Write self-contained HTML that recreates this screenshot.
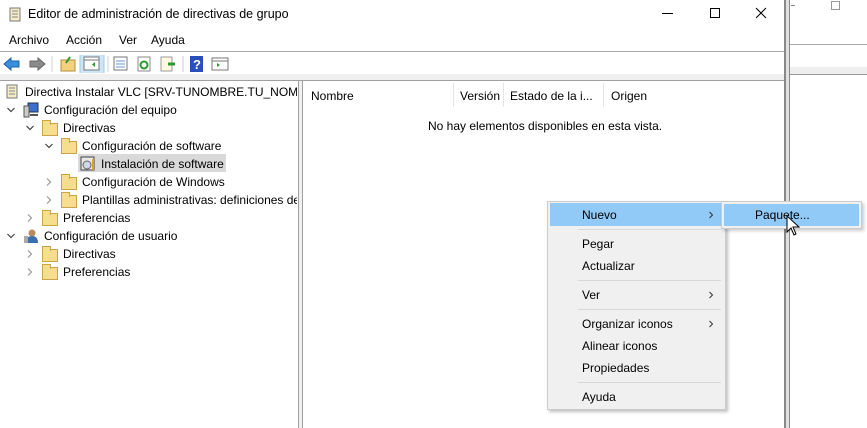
<!DOCTYPE html>
<html><head><meta charset="utf-8"><style>
*{margin:0;padding:0;box-sizing:border-box}
body{width:867px;height:428px;overflow:hidden;background:#fff;font-family:"Liberation Sans",sans-serif;font-size:12px;color:#000;position:relative}
.a{position:absolute}
.t{white-space:nowrap;font-size:12px}
.fold{position:absolute;width:16px;height:13px;background:#f7dd8e;border:1px solid #c9a44a}
.fold:before{content:"";position:absolute;left:-1px;top:-4px;width:7px;height:4px;background:#f7dd8e;border:1px solid #c9a44a;border-bottom:none}
.dn,.rt{position:absolute;width:10px;height:10px}
.mi{position:absolute;left:582px;font-size:12px}
.sep{position:absolute;left:578px;width:143px;height:1px;background:#d8d8d8}
.ar{position:absolute;width:8px;height:8px}
</style></head><body>
<svg width="0" height="0" style="position:absolute"><defs>
<symbol id="d" viewBox="0 0 10 10"><path d="M1.5 3l3.5 3.5L8.5 3" fill="none" stroke="#444" stroke-width="1.2"/></symbol>
<symbol id="r" viewBox="0 0 10 10"><path d="M3 1.5l3.5 3.5L3 8.5" fill="none" stroke="#999" stroke-width="1.2"/></symbol>
<symbol id="m" viewBox="0 0 8 8"><path d="M2.5 1l3 3-3 3" fill="none" stroke="#333" stroke-width="1"/></symbol>
</defs></svg>
<!-- right background window -->
<div class="a" style="left:784px;top:0;width:2px;height:428px;background:#888"></div>
<div class="a" style="left:786px;top:0;width:3px;height:428px;background:#e0e0e0"></div>
<div class="a" style="left:789px;top:0;width:1px;height:428px;background:#888"></div>
<div class="a" style="left:790px;top:44px;width:77px;height:1px;background:#aaa"></div>
<div class="a" style="left:790px;top:67px;width:77px;height:7px;background:#eee"></div>
<div class="a" style="left:790px;top:74px;width:77px;height:1px;background:#999"></div>
<div class="a" style="left:831px;top:1px;width:9px;height:9px;border:1px solid #999"></div>
<div class="a" style="left:791px;top:5px;width:4px;height:1px;background:#888"></div>

<!-- title -->
<svg class="a" style="left:7px;top:6px" width="16" height="18"><path d="M3 2h10v13H3z" fill="#f5ecc8" stroke="#777"/><path d="M5 5h6M5 8h6M5 11h6" stroke="#888"/></svg>
<div class="a t" style="left:28px;top:7px;font-size:12.5px">Editor de administración de directivas de grupo</div>
<div class="a" style="left:662px;top:13px;width:11px;height:1px;background:#000"></div>
<div class="a" style="left:710px;top:8px;width:10px;height:10px;border:1px solid #000"></div>
<svg class="a" style="left:755px;top:7px" width="12" height="12"><path d="M1 1L11 11M11 1L1 11" stroke="#000"/></svg>
<!-- menu -->
<div class="a t" style="left:9px;top:33px">Archivo</div>
<div class="a t" style="left:66px;top:33px">Acción</div>
<div class="a t" style="left:119px;top:33px">Ver</div>
<div class="a t" style="left:151px;top:33px">Ayuda</div>
<div class="a" style="left:0;top:51px;width:784px;height:1px;background:#aaa"></div>
<!-- toolbar -->
<svg class="a" style="left:3px;top:55px" width="240" height="18">
<path d="M1 9l7-6v3h8v6H8v3z" fill="#3a8ee0" stroke="#1d5fa8"/>
<path d="M42 9l-7-6v3h-8v6h8v3z" fill="#8a8a8a" stroke="#666"/>
<path d="M49 1v16" stroke="#ccc"/>
<rect x="58" y="5" width="14" height="11" fill="#f3d17e" stroke="#b48e3a"/><path d="M63 8l4-6" stroke="#2a9a2a" stroke-width="2"/>
<rect x="77" y="-2" width="24" height="22" fill="#cde6f7" stroke="#99cbed"/>
<rect x="81" y="2" width="15" height="13" fill="#fff" stroke="#777"/><path d="M81 5h15" stroke="#777"/><path d="M92 7l-3 2.5 3 2.5z" fill="#2a9a2a"/>
<path d="M105 1v16" stroke="#ccc"/>
<rect x="111" y="2" width="13" height="13" fill="#fff" stroke="#777"/><path d="M113 6h9M113 9h9M113 12h9" stroke="#6a9ad0"/>
<rect x="135" y="2" width="12" height="14" fill="#fff" stroke="#888"/><circle cx="141" cy="10" r="3.5" fill="none" stroke="#2a9a2a" stroke-width="2"/>
<rect x="158" y="2" width="11" height="14" fill="#fff8e0" stroke="#999"/><path d="M165 9h7" stroke="#2a9a2a" stroke-width="3"/>
<path d="M180 1v16" stroke="#ccc"/>
<rect x="187" y="1" width="13" height="16" fill="#2b4fb8"/><text x="190" y="14" fill="#fff" font-size="13" font-family="Liberation Sans" font-weight="bold">?</text>
<rect x="209" y="3" width="16" height="12" fill="#fff" stroke="#777"/><path d="M209 6h16" stroke="#777"/><path d="M214 8l3 2-3 2z" fill="#2a9a2a"/>
</svg>
<div class="a" style="left:0;top:74px;width:784px;height:6px;background:#f0f0f0"></div>
<div class="a" style="left:0;top:80px;width:784px;height:1px;background:#a0a0a0"></div>
<!-- splitter -->
<div class="a" style="left:298px;top:81px;width:1px;height:347px;background:#a0a0a0"></div>
<div class="a" style="left:299px;top:81px;width:3px;height:347px;background:#f0f0f0"></div>
<div class="a" style="left:302px;top:81px;width:1px;height:347px;background:#a0a0a0"></div>

<!-- tree -->
<svg class="a" style="left:4px;top:84px" width="16" height="16"><path d="M3 1h10v13H3z" fill="#f5ecc8" stroke="#777"/><path d="M5 4h6M5 7h6M5 10h6" stroke="#888"/></svg>
<div class="a t" style="left:25px;top:85px;width:272px;overflow:hidden">Directiva Instalar VLC [SRV-TUNOMBRE.TU_NOMBR</div>
<svg class="dn" style="left:6px;top:105px"><use href="#d"/></svg>
<svg class="a" style="left:23px;top:102px" width="16" height="16"><rect x="5" y="1" width="10" height="9" fill="#3a6fd0" stroke="#234"/><rect x="1" y="4" width="5" height="11" fill="#ccc" stroke="#555"/><path d="M7 13h8" stroke="#555" stroke-width="2"/></svg>
<div class="a t" style="left:44px;top:103px">Configuración del equipo</div>
<svg class="dn" style="left:25px;top:123px"><use href="#d"/></svg>
<div class="fold" style="left:42px;top:123px"></div>
<div class="a t" style="left:63px;top:121px">Directivas</div>
<svg class="dn" style="left:44px;top:141px"><use href="#d"/></svg>
<div class="fold" style="left:61px;top:141px"></div>
<div class="a t" style="left:82px;top:139px">Configuración de software</div>
<div class="a" style="left:78px;top:154px;width:148px;height:18px;background:#d9d9d9"></div>
<svg class="a" style="left:80px;top:156px" width="16" height="15"><rect x="1" y="1" width="13" height="13" fill="#e8e8e8" stroke="#444"/><circle cx="7" cy="9" r="4" fill="#cfd8e0" stroke="#666"/><path d="M13 3v11" stroke="#e0a020" stroke-width="2"/></svg>
<div class="a t" style="left:101px;top:157px">Instalación de software</div>
<svg class="rt" style="left:44px;top:177px"><use href="#r"/></svg>
<div class="fold" style="left:61px;top:177px"></div>
<div class="a t" style="left:82px;top:175px">Configuración de Windows</div>
<svg class="rt" style="left:44px;top:195px"><use href="#r"/></svg>
<div class="fold" style="left:61px;top:195px"></div>
<div class="a t" style="left:82px;top:193px;width:215px;overflow:hidden">Plantillas administrativas: definiciones de</div>
<svg class="rt" style="left:25px;top:213px"><use href="#r"/></svg>
<div class="fold" style="left:42px;top:213px"></div>
<div class="a t" style="left:63px;top:211px">Preferencias</div>
<svg class="dn" style="left:6px;top:231px"><use href="#d"/></svg>
<svg class="a" style="left:23px;top:228px" width="16" height="16"><circle cx="9" cy="5" r="3.5" fill="#b88a60"/><path d="M3 15q0-7 6-7t6 7z" fill="#3a6fb0"/><rect x="1" y="8" width="4" height="7" fill="#aaa"/></svg>
<div class="a t" style="left:44px;top:229px">Configuración de usuario</div>
<svg class="rt" style="left:25px;top:249px"><use href="#r"/></svg>
<div class="fold" style="left:42px;top:249px"></div>
<div class="a t" style="left:63px;top:247px">Directivas</div>
<svg class="rt" style="left:25px;top:267px"><use href="#r"/></svg>
<div class="fold" style="left:42px;top:267px"></div>
<div class="a t" style="left:63px;top:265px">Preferencias</div>

<!-- list header -->
<div class="a t" style="left:311px;top:89px">Nombre</div>
<div class="a" style="left:453px;top:83px;width:1px;height:24px;background:#e5e5e5"></div>
<div class="a t" style="left:460px;top:89px">Versión</div>
<div class="a" style="left:503px;top:83px;width:1px;height:24px;background:#e5e5e5"></div>
<div class="a t" style="left:510px;top:89px">Estado de la i...</div>
<div class="a" style="left:603px;top:83px;width:1px;height:24px;background:#e5e5e5"></div>
<div class="a t" style="left:611px;top:89px">Origen</div>
<div class="a t" style="left:428px;top:119px">No hay elementos disponibles en esta vista.</div>

<!-- context menu -->
<div class="a" style="left:547px;top:201px;width:179px;height:209px;background:#f0f0f0;border:1px solid #ccc;box-shadow:2px 2px 3px rgba(0,0,0,.25)"></div>
<div class="a" style="left:550px;top:203px;width:173px;height:23px;background:#91c9f7"></div>
<div class="mi" style="top:208px">Nuevo</div><svg class="ar" style="left:707px;top:211px"><use href="#m"/></svg>
<div class="sep" style="top:229px"></div>
<div class="mi" style="top:237px">Pegar</div>
<div class="mi" style="top:259px">Actualizar</div>
<div class="sep" style="top:280px"></div>
<div class="mi" style="top:288px">Ver</div><svg class="ar" style="left:707px;top:291px"><use href="#m"/></svg>
<div class="sep" style="top:309px"></div>
<div class="mi" style="top:317px">Organizar iconos</div><svg class="ar" style="left:707px;top:320px"><use href="#m"/></svg>
<div class="mi" style="top:339px">Alinear iconos</div>
<div class="mi" style="top:361px">Propiedades</div>
<div class="sep" style="top:382px"></div>
<div class="mi" style="top:390px">Ayuda</div>
<!-- submenu -->
<div class="a" style="left:721px;top:201px;width:141px;height:28px;background:#f0f0f0;border:1px solid #ccc;box-shadow:2px 2px 3px rgba(0,0,0,.2)"></div>
<div class="a" style="left:724px;top:204px;width:135px;height:22px;background:#91c9f7"></div>
<div class="a t" style="left:755px;top:208px">Paquete...</div>
<svg class="a" style="left:786px;top:215px" width="14" height="22"><path d="M1 1v16l4-4 3 7 2-1-3-7h6z" fill="#fff" stroke="#000"/></svg>
</body></html>
